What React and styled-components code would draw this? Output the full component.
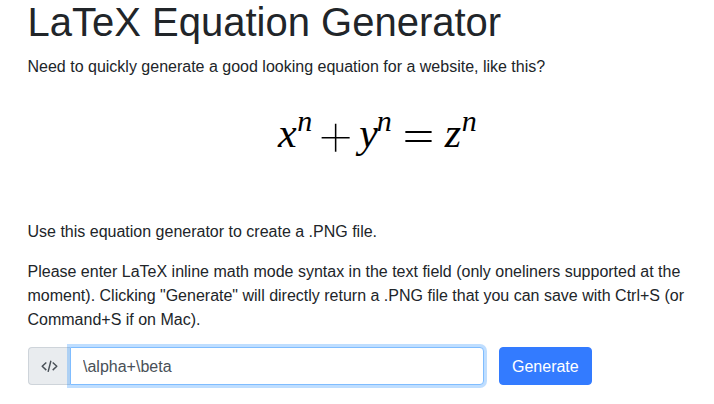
import React, { useState } from 'react';
import styled, { createGlobalStyle } from 'styled-components';

const GlobalStyle = createGlobalStyle`
  *, *::before, *::after {
    box-sizing: border-box;
  }

  body {
    margin: 0;
    overflow: hidden;
    background: #fff;
    color: #212529;
    font-family: 'Liberation Sans', Arial, sans-serif;
    font-size: 16px;
    line-height: 1.5;
  }
`;

const CodeIcon = () => (
  <svg width="17" height="16" viewBox="0 0 17 16" fill="none" stroke="currentColor" strokeWidth="1.45" strokeLinejoin="round">
    <path d="M5.3 4.5 1.2 8.3l4.1 3.8M11.7 4.5l4.1 3.8-4.1 3.8M9.9 2.7 7.1 13.9" />
  </svg>
);

const App = () => {
  const [formula, setFormula] = useState('\\alpha+\\beta');

  return (
    <Page>
      <GlobalStyle />
      <Title>LaTeX Equation Generator</Title>
      <Text>Need to quickly generate a good looking equation for a website, like this?</Text>
      <Equation>
        <Term>x<Exponent>n</Exponent></Term>
        <Plus>+</Plus>
        <Term>y<Exponent $kern="-1px">n</Exponent></Term>
        <Equals>=</Equals>
        <Term>z<Exponent>n</Exponent></Term>
      </Equation>
      <Text>Use this equation generator to create a .PNG file.</Text>
      <Text>
        Please enter LaTeX inline math mode syntax in the text field (only oneliners supported at the
        moment). Clicking "Generate" will directly return a .PNG file that you can save with Ctrl+S (or
        Command+S if on Mac).
      </Text>
      <Form onSubmit={(e) => e.preventDefault()}>
        <InputGroup>
          <Prepend><CodeIcon /></Prepend>
          <Input type="text" value={formula} onChange={(e) => setFormula(e.target.value)} />
        </InputGroup>
        <GenerateButton type="submit">Generate</GenerateButton>
      </Form>
    </Page>
  );
};

// Styled Components
const Page = styled.main`
  width: 714px;
  height: 404px;
  padding: 0 27.5px;
  overflow: hidden;
`;

const Title = styled.h1`
  margin: -2px 0 9px;
  font-size: 40px;
  font-weight: 500;
  line-height: 48px;
`;

const Text = styled.p`
  margin: 0 0 16px;
`;

const Equation = styled.div`
  display: flex;
  align-items: flex-start;
  height: 125px;
  padding: 5px 0 0 250.5px;
  color: #000;
  font-family: 'Liberation Serif', 'Times New Roman', serif;
  font-size: 42px;
  line-height: 66px;
`;

const Term = styled.span`
  display: inline-flex;
  align-items: baseline;
  font-style: italic;
`;

const Exponent = styled.span`
  margin-left: ${({ $kern }) => $kern || '0.5px'};
  font-size: 30px;
  transform: translateY(-16px);
`;

const Operator = styled.span`
  display: flex;
  justify-content: center;
  font-family: Inter, sans-serif;
`;

const Plus = styled(Operator)`
  width: 47px;
  font-size: 68px;
  font-weight: 100;
  transform: translateY(-1px);
`;

const Equals = styled(Operator)`
  width: 53px;
  font-size: 47px;
  font-weight: 200;
  transform: scaleX(1.5);
`;

const Form = styled.form`
  display: flex;
  gap: 15px;
  margin-top: -17px;
  padding: 16px 0 0 0.5px;
`;

const InputGroup = styled.div`
  display: flex;
  width: 456px;
`;

const Prepend = styled.span`
  display: flex;
  align-items: center;
  justify-content: center;
  width: 42px;
  border: 1px solid #ced4da;
  border-right: 0;
  border-radius: 4px 0 0 4px;
  background: #e9ecef;
  color: #495057;
`;

const Input = styled.input`
  flex: 1;
  height: 38px;
  padding: 7px 12px 5px;
  border: 1px solid #80bdff;
  border-radius: 0 4px 4px 0;
  outline: 0;
  box-shadow: 0 0 0 3px rgba(0, 123, 255, 0.25);
  color: #495057;
  font: inherit;
`;

const GenerateButton = styled.button`
  height: 38px;
  padding: 7px 12px 5px;
  border: 1px solid #337bff;
  border-radius: 4px;
  background: #337bff;
  color: #fff;
  font: inherit;
`;

export default App;
